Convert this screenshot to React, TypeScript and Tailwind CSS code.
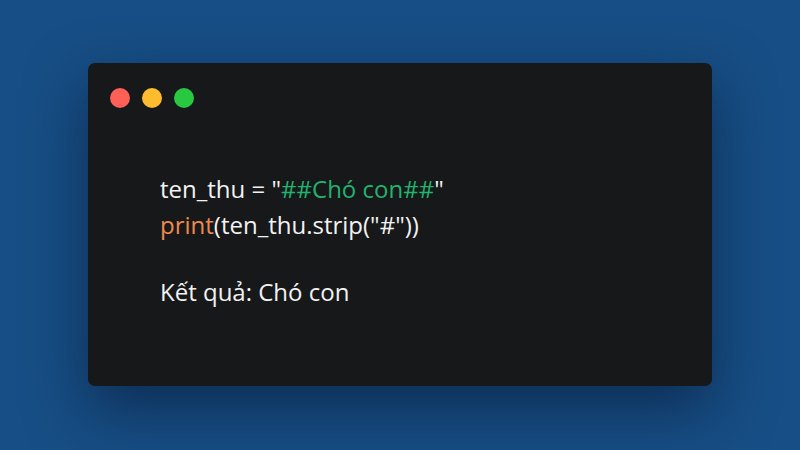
export default function App() {
  return (
    <div className="w-[800px] h-[450px] bg-[#174e85] flex items-start justify-center pt-[63px] font-['Open_Sans',sans-serif]">
      <div className="w-[624px] h-[323px] bg-[#17181a] rounded-[7px] shadow-[0_24px_60px_rgba(5,20,45,0.55)] flex flex-col">
        {/* window dots */}
        <div className="flex gap-[12px] pl-[22px] pt-[25px]">
          <span className="w-[20px] h-[20px] rounded-full bg-[#fe5f57]" />
          <span className="w-[20px] h-[20px] rounded-full bg-[#fdbc2e]" />
          <span className="w-[20px] h-[20px] rounded-full bg-[#28c840]" />
        </div>

        {/* code */}
        <div className="pl-[72px] pt-[63px] text-[24px] leading-[36px] text-[#f2f2f2]">
          <p>
            ten_thu = "<span className="text-[#22b36d]">##Chó con##</span>"
          </p>
          <p>
            <span className="text-[#ec8a4e]">print</span>(ten_thu.strip("#"))
          </p>
          <p className="mt-[31px]">Kết quả: Chó con</p>
        </div>
      </div>
    </div>
  );
}
